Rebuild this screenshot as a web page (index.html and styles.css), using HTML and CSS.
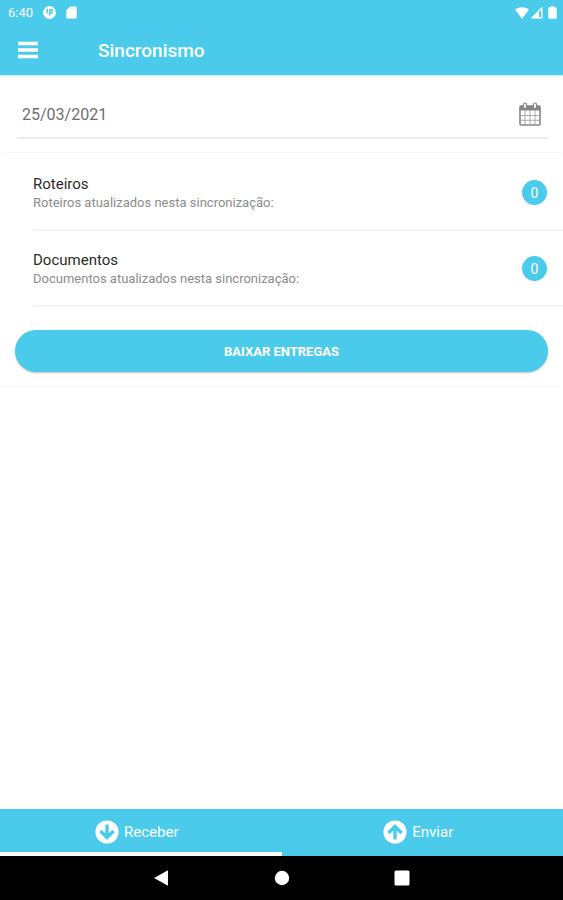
FILE: index.html
```html
<!DOCTYPE html>
<html lang="pt-BR">
<head>
    <meta charset="utf-8">
    <meta name="viewport" content="width=device-width, initial-scale=1">
    <title>Sincronismo</title>
    <link rel="stylesheet" href="styles.css">
</head>
<body>
    <div class="status-bar">
        <span class="time">6:40</span>
        <svg width="13" height="13" viewBox="0 0 13 13">
            <circle cx="6.5" cy="6.5" r="6.4" fill="#fff"/>
            <path d="M4.2 2.800v4.400M6.800 3v6.500M6.800 3.500h1a1.700 1.700 0 0 1 0 3.400h-1" fill="none" stroke="#4bcbeb" stroke-width="1.500"/>
        </svg>
        <svg width="11" height="13" viewBox="0 0 11 13">
            <path d="M4 .5h5.500a1.200 1.200 0 0 1 1.200 1.200v9.600a1.200 1.200 0 0 1-1.200 1.200h-8A1.200 1.200 0 0 1 .3 11.300V4.200z" fill="#fff"/>
            <path d="M4.300 1.500v2M6.300 1.500v2M8.300 1.500v2" stroke="#b5e9f7" stroke-width=".7"/>
        </svg>
        <div class="signals">
            <svg width="14" height="12" viewBox="0 0 14 12">
                <path d="M0 2.600Q7-2.200 14 2.600L7 11.800z" fill="#fff"/>
            </svg>
            <svg width="13" height="13" viewBox="0 0 13 13">
                <path d="M12.500.500v12H.5z" fill="#fff"/>
                <path d="M9 5.800 11 3.800v7.200H9z" fill="#4bcbeb"/>
            </svg>
            <svg class="battery" width="9" height="13" viewBox="0 0 9 13">
                <path d="M3 0h3v1.300h1.500a1.200 1.200 0 0 1 1.200 1.200v9a1.200 1.200 0 0 1-1.200 1.200h-6A1.200 1.200 0 0 1 .3 11.500v-9a1.200 1.200 0 0 1 1.200-1.200H3z" fill="#fff"/>
            </svg>
        </div>
    </div>
    <header class="toolbar">
        <button class="menu-button" type="button" aria-label="Menu">
            <svg width="20" height="18" viewBox="0 0 20 18">
                <path d="M0 2.500h20M0 9h20M0 15.500h20" stroke="#fff" stroke-width="3.600"/>
            </svg>
        </button>
        <h1>Sincronismo</h1>
    </header>
    <main>
        <div class="date-field">
            <input type="text" id="data" value="25/03/2021" aria-label="Data">
            <button class="calendar-button" type="button" aria-label="Abrir calendário">
                <svg width="22" height="24" viewBox="0 0 22 24" fill="none" stroke="#858585">
                    <rect x="1" y="4" width="20" height="19" rx="1" stroke-width="1.600"/>
                    <path d="M1 4h20v4.500H1z" fill="#858585" stroke="none"/>
                    <path d="M6 8v15M11 8v15M16 8v15M1 13.500h20M1 18.300h20" stroke-width=".9" stroke="#a0a0a0"/>
                    <rect x="4.500" y="1" width="3" height="5.500" rx="1.500" fill="#fff" stroke-width="1.200"/>
                    <rect x="14.500" y="1" width="3" height="5.500" rx="1.500" fill="#fff" stroke-width="1.200"/>
                </svg>
            </button>
        </div>
        <section class="card">
            <ul class="list">
                <li>
                    <div>
                        <h2>Roteiros</h2>
                        <p>Roteiros atualizados nesta sincronização:</p>
                    </div>
                    <span class="badge">0</span>
                </li>
                <li>
                    <div>
                        <h2>Documentos</h2>
                        <p>Documentos atualizados nesta sincronização:</p>
                    </div>
                    <span class="badge">0</span>
                </li>
            </ul>
            <button class="download-button" type="button">BAIXAR ENTREGAS</button>
        </section>
    </main>
    <nav class="tabs">
        <a class="tab active" href="#receber">
            <svg width="24" height="24" viewBox="0 0 24 24">
                <circle cx="12" cy="12" r="11.600" fill="#fff"/>
                <path d="M12 4.500v13M5.500 11 12 17.500l6.500-6.500" fill="none" stroke="#4bcbeb" stroke-width="3.400"/>
            </svg>
            <span>Receber</span>
        </a>
        <a class="tab" href="#enviar">
            <svg width="24" height="24" viewBox="0 0 24 24">
                <circle cx="12" cy="12" r="11.600" fill="#fff"/>
                <path d="M12 19.500v-13M5.500 13 12 6.500l6.500 6.500" fill="none" stroke="#4bcbeb" stroke-width="3.400"/>
            </svg>
            <span>Enviar</span>
        </a>
    </nav>
    <div class="system-nav">
        <button type="button" aria-label="Voltar">
            <svg width="16" height="16" viewBox="0 0 16 16"><path d="M0 8 14 .3v15.400z" fill="#fff"/></svg>
        </button>
        <button type="button" aria-label="Início">
            <svg width="16" height="16" viewBox="0 0 16 16"><circle cx="8" cy="8" r="7.200" fill="#fff"/></svg>
        </button>
        <button type="button" aria-label="Recentes">
            <svg width="16" height="16" viewBox="0 0 16 16"><rect x=".5" y=".5" width="15" height="15" rx="1.500" fill="#fff"/></svg>
        </button>
    </div>
</body>
</html>
```
FILE: styles.css
```css
* {
    box-sizing: border-box;
}
body {
    margin: 0;
    min-height: 100vh;
    display: flex;
    flex-direction: column;
    background-color: #fff;
    font-family: Roboto, sans-serif;
}
svg {
    display: block;
}
button {
    border: none;
    padding: 0;
    background: none;
    font-family: inherit;
}
.status-bar {
    display: flex;
    align-items: center;
    gap: 10px;
    height: 25px;
    padding: 0 6px 0 8px;
    background-color: #4bcbeb;
    color: #fff;
}
.time {
    font-size: 13px;
}
.signals {
    display: flex;
    align-items: center;
    gap: 1px;
    margin-left: auto;
}
.battery {
    margin-left: 4px;
}
.toolbar {
    display: flex;
    align-items: center;
    gap: 60px;
    height: 50px;
    padding: 0 18px;
    background-color: #4bcbeb;
    box-shadow: 0 1px 1px #c9eff9;
}
.toolbar h1 {
    margin: 0;
    color: #fff;
    font-size: 19px;
    font-weight: 500;
}
main {
    flex: 1;
}
.date-field {
    display: flex;
    align-items: center;
    margin: 15px 15px 13px 17px;
    padding: 0 7px 0 5px;
    height: 49px;
    border-bottom: 2px solid #eee;
}
.date-field input {
    flex: 1;
    min-width: 0;
    border: none;
    padding: 2px 0 0;
    outline: none;
    background: none;
    color: #6f6f6f;
    font-family: inherit;
    font-size: 16px;
}
.card {
    padding-bottom: 14px;
    border-top: 1px solid #f7f7f7;
    border-radius: 4px;
    box-shadow: 0 1px 1px #fafafa;
}
.list {
    margin: 0;
    padding: 2px 0 23px 33px;
    list-style: none;
}
.list li {
    display: flex;
    align-items: center;
    justify-content: space-between;
    height: 76px;
    padding-right: 16px;
    border-bottom: 2px solid #f3f3f3;
}
.list h2 {
    margin: 0;
    padding-top: 2px;
    color: #2b2b2b;
    font-size: 15px;
    font-weight: 400;
    line-height: 19px;
}
.list p {
    margin: 0;
    color: #8c8c8c;
    font-size: 13px;
    line-height: 18px;
}
.badge {
    width: 25px;
    height: 25px;
    border-radius: 50%;
    background-color: #4bcbeb;
    color: #fff;
    font-size: 14px;
    line-height: 26px;
    text-align: center;
}
.download-button {
    display: block;
    width: calc(100% - 30px);
    height: 42px;
    margin: 0 15px;
    border-radius: 21px;
    background-color: #4bcbeb;
    box-shadow: 0 1px 2px rgba(0, 0, 0, 0.25);
    color: #fff;
    font-size: 13px;
    font-weight: 700;
}
.tabs {
    display: flex;
    height: 47px;
    background-color: #4bcbeb;
}
.tab {
    flex: 1;
    display: flex;
    align-items: center;
    justify-content: center;
    gap: 5px;
    padding: 3px 8px 0 0;
    border-bottom: 4px solid transparent;
    color: #fff;
    font-size: 15px;
    text-decoration: none;
}
.tab.active {
    border-bottom-color: #fff;
}
.system-nav {
    display: flex;
    align-items: center;
    justify-content: center;
    gap: 104px;
    height: 44px;
    background-color: #000;
}
```
